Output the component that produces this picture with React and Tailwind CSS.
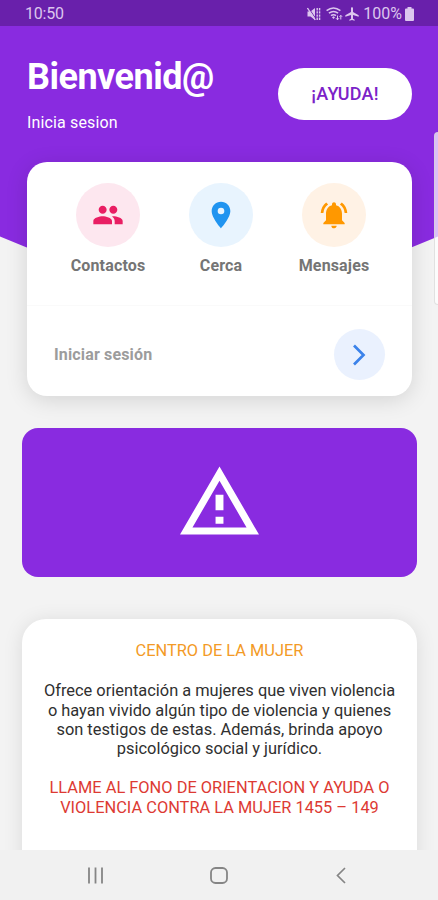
import React from 'react';
import { MdPeople, MdLocationOn, MdNotificationsActive, MdAirplanemodeActive } from 'react-icons/md';

const shortcuts = [
  { label: 'Contactos', icon: MdPeople, circle: 'bg-[#fde7ef]', color: 'text-[#e91e63]' },
  { label: 'Cerca', icon: MdLocationOn, circle: 'bg-[#e8f4fe]', color: 'text-[#2094f0]' },
  { label: 'Mensajes', icon: MdNotificationsActive, circle: 'bg-[#fff2e5]', color: 'text-[#ff9800]' },
];

const MuteVibrateIcon = () => (
  <svg width="14" height="14" viewBox="0 0 14 14" fill="currentColor">
    <path d="M.5 4.500h3L8 1v12L3.500 9.500h-3z" />
    <path d="M1.500 .8L9 12" stroke="#6920ab" strokeWidth="1" />
    <path d="M.5 1L8.300 13" stroke="currentColor" strokeWidth="1.300" />
    <path d="M10.200 1v12M12.600 1v12" stroke="currentColor" strokeWidth="1.400" fill="none" strokeDasharray="2.400 0.800" />
  </svg>
);

const WifiIcon = () => (
  <svg width="17" height="14" viewBox="0 0 17 14" fill="none" stroke="currentColor" strokeWidth="1.500">
    <path d="M.6 3.700Q7.500-1.700 14.400 3.700M2.900 6.200q4.600-3.600 9.200 0M5 8.700q2.500-2 5 0" />
    <path d="M6 10.200l1.500-1 1.500 1-1.500 1.800z" fill="currentColor" stroke="none" />
    <path d="M11.500 13V8.500M10 11.200l1.500 1.600 1.500-1.600M14.800 12.500v-4M13.500 9.800l1.300-1.500 1.300 1.500" strokeWidth="1" />
  </svg>
);

const StatusBar = () => (
  <div className="flex h-[26px] shrink-0 items-center justify-between bg-[#6920ab] pt-[2px] pr-6 pl-[25px] text-[#dcc6ee]">
    <span className="text-[16px] leading-none tracking-[-0.2px]">10:50</span>
    <div className="flex items-center">
      <MuteVibrateIcon />
      <span className="ml-[5px]"><WifiIcon /></span>
      <MdAirplanemodeActive className="ml-[1px]" size={16} />
      <span className="ml-[3px] text-[16px] leading-none">100%</span>
      <svg className="ml-[3px]" width="9" height="14" viewBox="0 0 9 14" fill="currentColor">
        <path d="M2.500 0h4v1.500H8q1 0 1 1V13q0 1-1 1H1q-1 0-1-1V2.500q0-1 1-1h1.500z" />
      </svg>
    </div>
  </div>
);

const Header = () => (
  <div className="flex h-[136px] shrink-0 items-start justify-between pr-[26px] pl-[27px] text-white">
    <div className="pt-[29px]">
      <h1 className="text-[36px] leading-[44px] font-bold tracking-[-0.5px]">Bienvenid@</h1>
      <p className="mt-[14px] text-[16px] leading-5 tracking-[0.15px]">Inicia sesion</p>
    </div>
    <button className="mt-[42px] h-[52px] w-[134px] rounded-full bg-white pb-px text-[18px] font-medium tracking-[0.2px] text-[#7b22c8]">
      ¡AYUDA!
    </button>
  </div>
);

const AccessCard = () => (
  <div className="mr-[26px] ml-[27px] h-[234px] shrink-0 rounded-[20px] bg-white shadow-[0_4px_22px_rgba(0,0,0,0.13)]">
    <div className="flex h-36 justify-between border-b border-[#fafafa] pt-[21px] pr-[22px] pl-[25px]">
      {shortcuts.map(({ label, icon: Icon, circle, color }) => (
        <div key={label} className="flex w-28 flex-col items-center">
          <div className={`flex h-16 w-16 items-center justify-center rounded-full ${circle} ${color}`}>
            <Icon size={32} />
          </div>
          <span className="mt-[7px] text-[16px] leading-6 font-bold tracking-[0.15px] text-[#757575]">{label}</span>
        </div>
      ))}
    </div>
    <div className="flex items-center justify-between pt-[23px] pr-[27px] pl-[27px]">
      <span className="text-[16px] font-bold tracking-[0.15px] text-[#9c9c9c]">Iniciar sesión</span>
      <button className="flex h-[51px] w-[51px] items-center justify-center rounded-full bg-[#eaf1fe] pr-px">
        <svg width="14" height="22" viewBox="0 0 14 22" fill="none" stroke="#3b82ea" strokeWidth="2.700">
          <path d="M2 1.500L11.500 11 2 20.500" />
        </svg>
      </button>
    </div>
  </div>
);

const AlertBanner = () => (
  <div className="mt-8 mr-[21px] ml-[22px] flex h-[149px] shrink-0 justify-center rounded-[16px] bg-[#892be0] pt-[38px]">
    <svg width="79" height="69" viewBox="1 2 22 19" fill="#fff">
      <path d="M12 5.990L19.530 19H4.470L12 5.990M12 2L1 21h22L12 2z" />
      <path d="M10.900 9.900h2.200v4.300h-2.200zM10.900 16h2.200v2h-2.200z" />
    </svg>
  </div>
);

const InfoCard = () => (
  <div className="mt-[42px] mr-[21px] ml-[22px] h-[260px] shrink-0 rounded-t-[24px] bg-white pt-[22px] text-center text-[16.400px] leading-[19.300px] whitespace-nowrap text-[#303030] shadow-[0_2px_20px_rgba(0,0,0,0.1)]">
    <h2 className="text-[#f39a26]">CENTRO DE LA MUJER</h2>
    <p className="mt-[21px]">
      Ofrece orientación a mujeres que viven violencia<br />
      o hayan vivido algún tipo de violencia y quienes<br />
      son testigos de estas. Además, brinda apoyo<br />
      psicológico social y jurídico.
    </p>
    <p className="mt-[20px] text-[#dd3a33]">
      LLAME AL FONO DE ORIENTACION Y AYUDA O<br />
      VIOLENCIA CONTRA LA MUJER 1455 – 149
    </p>
  </div>
);

const NavBar = () => (
  <div className="flex h-[50px] shrink-0 items-center justify-between bg-[#f1f1f1] pr-[92px] pl-[87px] text-[#858585]">
    <svg width="17" height="17" viewBox="0 0 17 17" stroke="currentColor" strokeWidth="1.800">
      <path d="M2 .5v16M8.500.5v16M15 .5v16" />
    </svg>
    <svg className="mr-[3px]" width="18" height="17" viewBox="0 0 18 17" fill="none" stroke="currentColor" strokeWidth="1.800">
      <rect x="1" y="1" width="16" height="15" rx="4.500" />
    </svg>
    <svg width="10" height="17" viewBox="0 0 10 17" fill="none" stroke="currentColor" strokeWidth="1.700">
      <path d="M9 1L1.500 8.500 9 16" />
    </svg>
  </div>
);

const App = () => {
  return (
    <div className="relative isolate flex h-[900px] w-[438px] flex-col overflow-hidden bg-[#f3f3f3] font-['Roboto',sans-serif]">
      {/* Curved header backdrop */}
      <svg className="absolute top-0 left-0 -z-10" width="438" height="300" viewBox="0 0 438 300">
        <path d="M0 0H438V236.500Q219 332 0 236.500Z" fill="#892be0" />
      </svg>

      <StatusBar />
      <main className="flex min-h-0 flex-1 flex-col overflow-hidden">
        <Header />
        <AccessCard />
        <AlertBanner />
        <InfoCard />
      </main>
      <NavBar />

      {/* Edge panel handle */}
      <div className="absolute top-[132px] -right-1 h-[173px] w-2 rounded-l-[4px] border border-[#d5d5d5]/70 bg-white/70" />
    </div>
  );
};

export default App;
